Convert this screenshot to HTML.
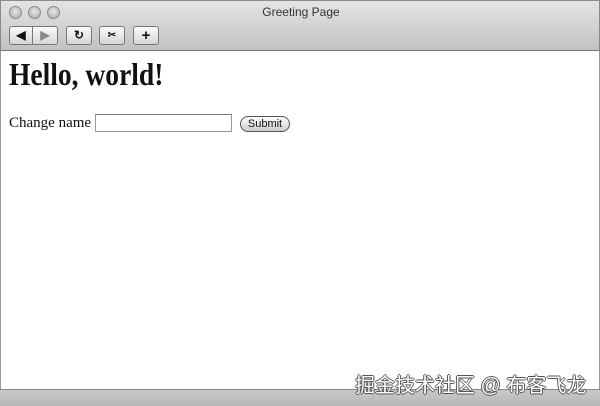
<!DOCTYPE html>
<html><head><meta charset="utf-8"><style>
*{margin:0;padding:0;box-sizing:border-box}
body{width:600px;height:406px;overflow:hidden;background:#fff;position:relative;font-family:"Liberation Serif",serif}
.top{position:absolute;left:0;top:0;width:600px;height:51px;background:linear-gradient(#e4e4e4,#c2c2c2);border:1px solid #8a8a8a;border-bottom:1px solid #777}
.c{position:absolute;top:5px;width:13px;height:13px;border-radius:50%;background:radial-gradient(circle at 50% 40%,#e6e6e6,#a9a9a9);border:1px solid #8a8a8a}
.t{position:absolute;left:0;width:600px;top:4px;text-align:center;font:12px "Liberation Sans",sans-serif;color:#333}
.b{position:absolute;top:25px;height:19px;border:1px solid #777;border-radius:3px;background:linear-gradient(#fafafa,#d6d6d6);font:bold 12px "Liberation Sans",sans-serif;text-align:center;line-height:17px;color:#111}
.side{position:absolute;top:51px;bottom:17px;width:1px;background:#999}
.bot{position:absolute;left:0;bottom:0;width:600px;height:17px;background:linear-gradient(#c8c8c8,#b8b8b8);border-top:1px solid #888}
h1{position:absolute;left:9px;top:56px;font-size:32px;font-weight:bold;color:#111;transform:scaleX(0.86);transform-origin:left top;white-space:nowrap}
.form{position:absolute;left:9px;top:115px;font-size:15px;color:#111}
.inp{position:absolute;left:95px;top:114px;width:137px;height:18px;border:1px solid #999;border-top-color:#777;background:#fff}
.sub{position:absolute;left:240px;top:116px;width:50px;height:16px;border:1px solid #555;border-radius:8px;background:linear-gradient(#fff,#ccc);font:11px "Liberation Sans",sans-serif;text-align:center;line-height:14px;color:#111}
.wm{position:absolute;left:355px;top:369px;font:20px "Liberation Sans","Noto Sans CJK SC",sans-serif;color:#fff;text-shadow:-1px 0 #555,1px 0 #555,0 -1px #555,0 1px #555}
</style></head><body>
<div class="top">
<div class="c" style="left:8px"></div><div class="c" style="left:27px"></div><div class="c" style="left:46px"></div>
<div class="t">Greeting Page</div>
<div class="b" style="left:8px;width:24px;border-radius:3px 0 0 3px">◀</div>
<div class="b" style="left:31px;width:26px;border-radius:0 3px 3px 0;color:#888">▶</div>
<div class="b" style="left:65px;width:26px">↻</div>
<div class="b" style="left:98px;width:26px;font-size:10px">✂</div>
<div class="b" style="left:132px;width:26px;font-size:15px">+</div>
</div>
<div class="side" style="left:0"></div><div class="side" style="right:0"></div>
<h1>Hello, world!</h1>
<div class="form">Change name</div>
<div class="inp"></div>
<div class="sub">Submit</div>
<div class="bot"></div>
<div class="wm">掘金技术社区 @ 布客飞龙</div>
</body></html>
